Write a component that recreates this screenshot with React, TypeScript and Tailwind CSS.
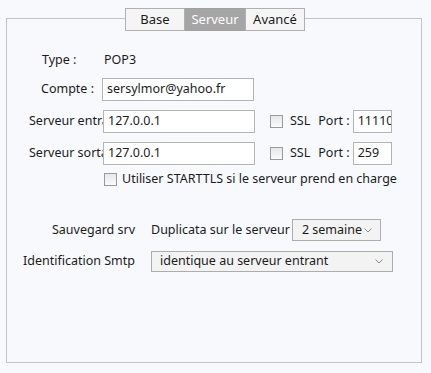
import React from "react";

const font = { fontFamily: '"Noto Sans", "Open Sans", sans-serif' };

function Checkbox() {
  return (
    <div className="w-[13px] h-[13px] border border-[#9a9a9a] bg-[linear-gradient(#e8e8e8,#fafafa)] shrink-0" />
  );
}

function Chevron() {
  return (
    <svg width="8" height="5" viewBox="0 0 8 5" className="shrink-0">
      <path d="M0.5 0.5 L4 4 L7.5 0.5" fill="none" stroke="#8a8a8a" strokeWidth="1" />
    </svg>
  );
}

function Input({ value, w }: { value: string; w: string }) {
  return (
    <div className={`${w} h-[23px] bg-white border border-[#b4b4b4] flex items-center pl-[4px] overflow-hidden whitespace-nowrap shrink-0`}>
      {value}
    </div>
  );
}

function SslPort({ port }: { port: string }) {
  return (
    <>
      <div className="ml-[15px] flex items-center">
        <Checkbox />
      </div>
      <span className="ml-[7px]">SSL</span>
      <span className="ml-[8px] whitespace-nowrap">Port :</span>
      <div className="ml-[3px]">
        <Input value={port} w="w-[39px]" />
      </div>
    </>
  );
}

export default function App() {
  return (
    <div
      className="w-[431px] h-[373px] bg-[#f8f9fc] text-[12.5px] text-[#1b1b1b] pt-[8px] overflow-hidden"
      style={font}
    >
      <div className="relative z-10 flex ml-[125px] h-[23px] text-[13px]">
        <div className="w-[60px] h-[23px] border border-[#b0b0b0] bg-[#f5f5f5] flex items-center justify-center">
          Base
        </div>
        <div className="w-[60px] h-[23px] border-y border-[#a0a0a0] bg-[#a5a5a5] text-white flex items-center justify-center">
          Serveur
        </div>
        <div className="w-[60px] h-[23px] border border-[#b0b0b0] bg-[#f5f5f5] flex items-center justify-center">
          Avancé
        </div>
      </div>
      <div className="ml-[6px] w-[416px] h-[345px] -mt-[13px] border border-[#c3c3c3] bg-[#f8f9fc]">
        {/* Type */}
        <div className="mt-[31px] h-[20px] flex items-center ml-[22px]">
          <div className="w-[73px] pl-[13px]">Type :</div>
          <div className="pl-[2px]">POP3</div>
        </div>
        {/* Compte */}
        <div className="mt-[8px] h-[23px] flex items-center ml-[22px]">
          <div className="w-[73px] pl-[12px] whitespace-nowrap overflow-hidden">Compte :</div>
          <Input value="sersylmor@yahoo.fr" w="w-[152px]" />
        </div>
        {/* Serveur entrant */}
        <div className="mt-[9px] h-[23px] flex items-center ml-[22px]">
          <div className="w-[74px] whitespace-nowrap overflow-hidden">Serveur entrant</div>
          <Input value="127.0.0.1" w="w-[152px]" />
          <SslPort port="11110" />
        </div>
        {/* Serveur sortant */}
        <div className="mt-[9px] h-[23px] flex items-center ml-[22px]">
          <div className="w-[74px] whitespace-nowrap overflow-hidden">Serveur sortant</div>
          <Input value="127.0.0.1" w="w-[152px]" />
          <SslPort port="259" />
        </div>
        {/* STARTTLS */}
        <div className="mt-[5px] h-[18px] flex items-center ml-[97px]">
          <Checkbox />
          <span className="ml-[5px] whitespace-nowrap">Utiliser STARTTLS si le serveur prend en charge</span>
        </div>
        {/* Sauvegard */}
        <div className="mt-[31px] h-[22px] flex items-center">
          <div className="w-[128px] text-right">Sauvegard srv</div>
          <span className="ml-[16px] whitespace-nowrap">Duplicata sur le serveur</span>
          <div className="ml-[2px] w-[89px] h-[22px] border border-[#adadad] bg-[#f3f3f3] flex items-center pl-[9px] pr-[5px] gap-[2px] overflow-hidden whitespace-nowrap shrink-0">
            <span>2 semaine</span>
            <Chevron />
          </div>
        </div>
        {/* Identification */}
        <div className="mt-[10px] h-[21px] flex items-center">
          <div className="w-[128px] text-right whitespace-nowrap">Identification Smtp</div>
          <div className="ml-[16px] w-[242px] h-[21px] border border-[#adadad] bg-[#f3f3f3] flex items-center justify-between pl-[8px] pr-[9px]">
            <span>identique au serveur entrant</span>
            <Chevron />
          </div>
        </div>
      </div>
    </div>
  );
}
